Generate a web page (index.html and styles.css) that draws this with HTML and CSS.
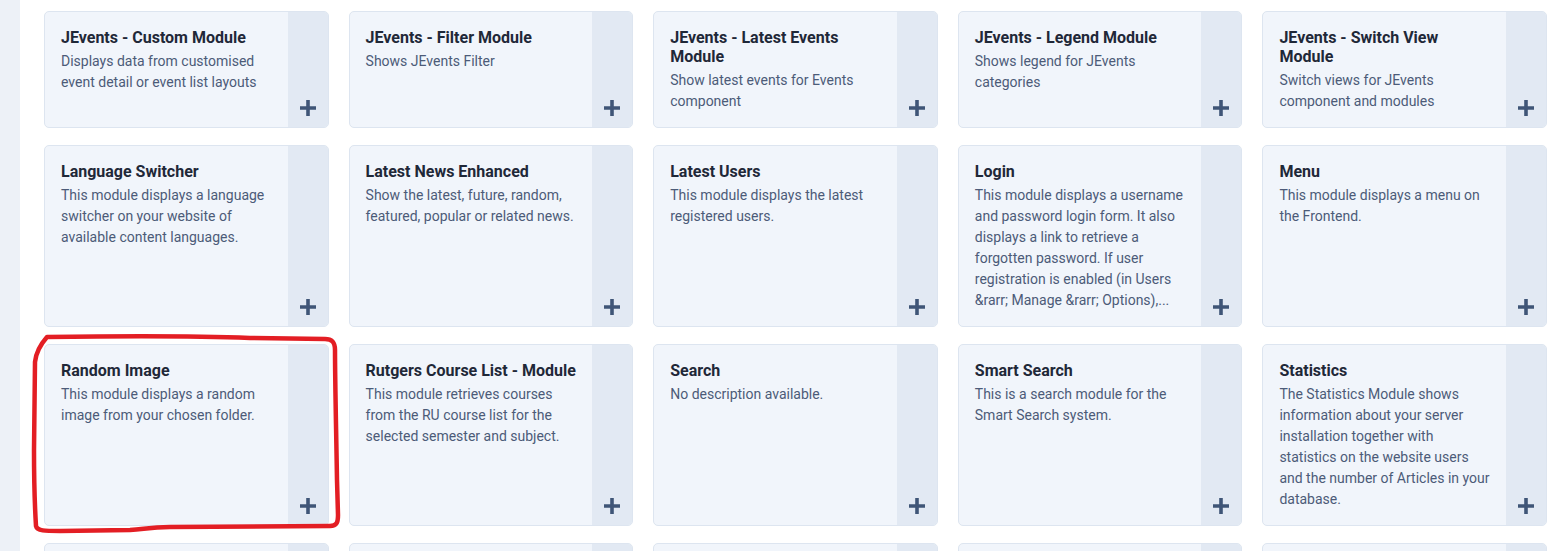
FILE: index.html
```html
<!DOCTYPE html>
<html lang="en">
<head>
<meta charset="utf-8">
<title>Modules</title>
<link rel="stylesheet" href="styles.css">
</head>
<body>
<div class="page">
  <aside class="rail"></aside>
  <main class="main">
    <div class="grid">
      <div class="card"><div class="body"><h3 class="title">JEvents - Custom Module</h3><p class="desc">Displays data from customised event detail or event list layouts</p></div><div class="side"><svg class="plus" viewBox="0 0 18 18"><path d="M9 1v16M1 9h16"/></svg></div></div>
      <div class="card"><div class="body"><h3 class="title">JEvents - Filter Module</h3><p class="desc">Shows JEvents Filter</p></div><div class="side"><svg class="plus" viewBox="0 0 18 18"><path d="M9 1v16M1 9h16"/></svg></div></div>
      <div class="card"><div class="body"><h3 class="title">JEvents - Latest Events Module</h3><p class="desc">Show latest events for Events component</p></div><div class="side"><svg class="plus" viewBox="0 0 18 18"><path d="M9 1v16M1 9h16"/></svg></div></div>
      <div class="card"><div class="body"><h3 class="title">JEvents - Legend Module</h3><p class="desc">Shows legend for JEvents categories</p></div><div class="side"><svg class="plus" viewBox="0 0 18 18"><path d="M9 1v16M1 9h16"/></svg></div></div>
      <div class="card"><div class="body"><h3 class="title">JEvents - Switch View Module</h3><p class="desc">Switch views for JEvents component and modules</p></div><div class="side"><svg class="plus" viewBox="0 0 18 18"><path d="M9 1v16M1 9h16"/></svg></div></div>

      <div class="card"><div class="body"><h3 class="title">Language Switcher</h3><p class="desc">This module displays a language switcher on your website of available content languages.</p></div><div class="side"><svg class="plus" viewBox="0 0 18 18"><path d="M9 1v16M1 9h16"/></svg></div></div>
      <div class="card"><div class="body"><h3 class="title">Latest News Enhanced</h3><p class="desc">Show the latest, future, random, featured, popular or related news.</p></div><div class="side"><svg class="plus" viewBox="0 0 18 18"><path d="M9 1v16M1 9h16"/></svg></div></div>
      <div class="card"><div class="body"><h3 class="title">Latest Users</h3><p class="desc">This module displays the latest registered users.</p></div><div class="side"><svg class="plus" viewBox="0 0 18 18"><path d="M9 1v16M1 9h16"/></svg></div></div>
      <div class="card"><div class="body"><h3 class="title">Login</h3><p class="desc">This module displays a username and password login form. It also displays a link to retrieve a forgotten password. If user registration is enabled (in Users &amp;rarr; Manage &amp;rarr; Options),...</p></div><div class="side"><svg class="plus" viewBox="0 0 18 18"><path d="M9 1v16M1 9h16"/></svg></div></div>
      <div class="card"><div class="body"><h3 class="title">Menu</h3><p class="desc">This module displays a menu on the Frontend.</p></div><div class="side"><svg class="plus" viewBox="0 0 18 18"><path d="M9 1v16M1 9h16"/></svg></div></div>

      <div class="card"><div class="body"><h3 class="title">Random Image</h3><p class="desc">This module displays a random image from your chosen folder.</p></div><div class="side"><svg class="plus" viewBox="0 0 18 18"><path d="M9 1v16M1 9h16"/></svg></div></div>
      <div class="card"><div class="body"><h3 class="title">Rutgers Course List - Module</h3><p class="desc">This module retrieves courses from the RU course list for the selected semester and subject.</p></div><div class="side"><svg class="plus" viewBox="0 0 18 18"><path d="M9 1v16M1 9h16"/></svg></div></div>
      <div class="card"><div class="body"><h3 class="title">Search</h3><p class="desc">No description available.</p></div><div class="side"><svg class="plus" viewBox="0 0 18 18"><path d="M9 1v16M1 9h16"/></svg></div></div>
      <div class="card"><div class="body"><h3 class="title">Smart Search</h3><p class="desc">This is a search module for the Smart Search system.</p></div><div class="side"><svg class="plus" viewBox="0 0 18 18"><path d="M9 1v16M1 9h16"/></svg></div></div>
      <div class="card"><div class="body"><h3 class="title">Statistics</h3><p class="desc">The Statistics Module shows information about your server installation together with statistics on the website users and the number of Articles in your database.</p></div><div class="side"><svg class="plus" viewBox="0 0 18 18"><path d="M9 1v16M1 9h16"/></svg></div></div>

      <div class="card card-empty"><div class="body"></div><div class="side"></div></div>
      <div class="card card-empty"><div class="body"></div><div class="side"></div></div>
      <div class="card card-empty"><div class="body"></div><div class="side"></div></div>
      <div class="card card-empty"><div class="body"></div><div class="side"></div></div>
      <div class="card card-empty"><div class="body"></div><div class="side"></div></div>
    </div>
  </main>
  <svg class="annotation" viewBox="0 0 1552 551" width="1552" height="551">
    <path d="M47,337 C40,345 36,352 35,362 L34,450 C34,490 35,510 36,526 C37,531 45,531 60,531 L130,530 C145,529 150,527 170,527 L330,526 C337,526 338,522 338,515 L337,480 C336,420 335,380 335,350 C335,342 332,339 325,339 L250,338 C200,336 120,336 47,337 Z"/>
  </svg>
</div>
</body>
</html>
```

FILE: styles.css
```css
html, body {
  margin: 0;
  padding: 0;
  background: #ffffff;
  font-family: Roboto, "Liberation Sans", Arial, sans-serif;
  overflow: hidden;
}

.page {
  position: relative;
  display: flex;
  width: 1552px;
  height: 551px;
  overflow: hidden;
}

.rail {
  width: 20px;
  flex: 0 0 20px;
  background: #edf1f7;
}

.main {
  flex: 1;
  padding: 11px 5px 0 24px;
}

.grid {
  display: grid;
  grid-template-columns: repeat(5, 1fr);
  column-gap: 20px;
  row-gap: 17px;
}

.card {
  display: flex;
  background: #f1f5fb;
  border: 1px solid #dde5f0;
  border-radius: 5px;
  overflow: hidden;
  min-height: 115px;
}

.body {
  flex: 1;
  padding: 16px 16px 15px 16px;
  min-width: 0;
}

.title {
  margin: 0 0 4px;
  font-size: 16px;
  line-height: 19px;
  font-weight: 700;
  color: #1f2838;
}

.desc {
  margin: 0;
  font-size: 14px;
  line-height: 21px;
  color: #4c5b78;
}

.side {
  flex: 0 0 40px;
  background: #e2e9f3;
  display: flex;
  align-items: flex-end;
  justify-content: center;
  padding-bottom: 10px;
  box-sizing: border-box;
}

.plus {
  width: 18px;
  height: 18px;
  display: block;
}

.plus path {
  stroke: #3f5577;
  stroke-width: 3.6;
  fill: none;
}

.annotation {
  position: absolute;
  left: 0;
  top: 0;
  pointer-events: none;
}

.annotation path {
  fill: none;
  stroke: #e31e24;
  stroke-width: 4.5;
  stroke-linejoin: round;
}
```
